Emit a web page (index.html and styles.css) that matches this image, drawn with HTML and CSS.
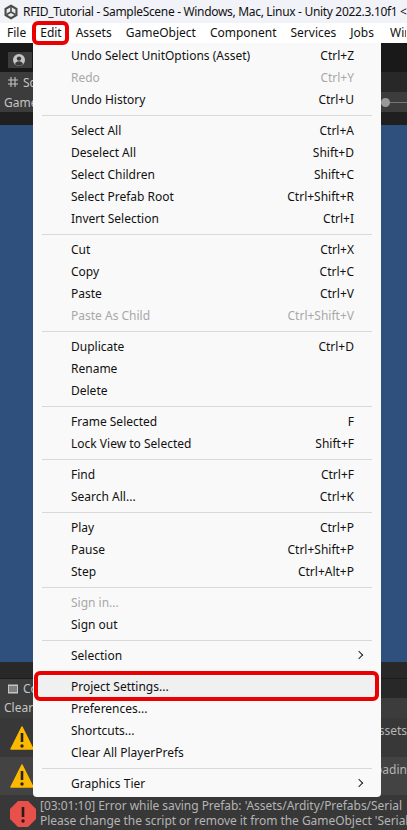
FILE: index.html
```html
<!DOCTYPE html>
<html lang="en">
<head>
  <meta charset="UTF-8" />
  <title>RFID_Tutorial - SampleScene - Unity</title>
  <link rel="stylesheet" href="styles.css">
</head>
<body>
  <div class="titlebar">
    <svg class="unity-logo" width="16" height="16" viewBox="0 0 16 16">
      <path d="M8 .5l6.500 3.700v7.600L8 15.500l-6.500-3.700V4.200z" fill="#4a4a4a"/>
      <path d="M8 3l4.400 2.500v5L8 13l-4.400-2.500v-5z" fill="#eaeaea"/>
      <path d="M8 8V3M8 8l4.400 2.500M8 8l-4.400 2.500" stroke="#4a4a4a" stroke-width="1.500"/>
    </svg>
    <span class="title-text">RFID_Tutorial - SampleScene - Windows, Mac, Linux - Unity 2022.3.10f1 &lt;</span>
  </div>

  <nav class="menubar">
    <a>File</a>
    <a class="marked">Edit</a>
    <a>Assets</a>
    <a>GameObject</a>
    <a>Component</a>
    <a>Services</a>
    <a>Jobs</a>
    <a>Window</a>
  </nav>

  <div class="toolbar">
    <div class="account">
      <svg width="12" height="12" viewBox="0 0 12 12">
        <circle cx="6" cy="6" r="6" fill="#c4c4c4"/>
        <circle cx="6" cy="4.600" r="2.200" fill="#3a3a3a"/>
        <path d="M2 10.200c.6-2.200 2.200-3 4-3s3.400.8 4 3a6 6 0 0 1-8 0z" fill="#3a3a3a"/>
      </svg>
    </div>
  </div>

  <div class="tabs">
    <div class="tab">
      <svg class="tab-icon" width="10" height="10" viewBox="0 0 10 10">
        <path d="M3 0v10M7 0v10M0 3h10M0 7h10" stroke="#c4c4c4" stroke-width="1.100"/>
      </svg>
      Scene
    </div>
  </div>
  <div class="scene-tools">
    <span class="tool-box">Game</span>
    <div class="slider"><i></i></div>
  </div>
  <div class="band"></div>
  <div class="scene-view"></div>
  <div class="gap-bar"></div>

  <div class="tabs console-tabs">
    <div class="tab">
      <svg class="tab-icon" width="10" height="10" viewBox="0 0 10 10">
        <path d="M0 .5h10v9H0z" fill="#c4c4c4"/>
        <path d="M1 3h8M1 5h8M1 7h8" stroke="#3c3c3c" stroke-width="1"/>
      </svg>
      Console
    </div>
  </div>
  <div class="console-tools">Clear</div>
  <div class="log-row">
    <svg class="log-icon warn" width="26" height="26" viewBox="0 0 26 26">
      <path d="M12 2L23 24H1z" fill="#fdb900" stroke="#fdb900" stroke-width="1.500" stroke-linejoin="round"/>
      <path d="M12 8v9" stroke="#222" stroke-width="2.600"/>
      <circle cx="12" cy="21" r="1.700" fill="#222"/>
    </svg>
    <p class="log-text"><span class="log-end">ssets</span></p>
  </div>
  <div class="log-row alt">
    <svg class="log-icon warn" width="26" height="26" viewBox="0 0 26 26">
      <path d="M12 2L23 24H1z" fill="#fdb900" stroke="#fdb900" stroke-width="1.500" stroke-linejoin="round"/>
      <path d="M12 8v9" stroke="#222" stroke-width="2.600"/>
      <circle cx="12" cy="21" r="1.700" fill="#222"/>
    </svg>
    <p class="log-text"><span class="log-end">oadin</span></p>
  </div>
  <div class="log-row error">
    <svg class="log-icon stop" width="26" height="26" viewBox="0 0 26 26">
      <path d="M8 0h10l8 8v10l-8 8H8l-8-8V8z" fill="#e8504a"/>
      <path d="M13 6v10" stroke="#2a1a1a" stroke-width="2.600"/>
      <circle cx="13" cy="20" r="1.700" fill="#2a1a1a"/>
    </svg>
    <div class="log-text">
      <p class="log-line">[03:01:10] Error while saving Prefab: 'Assets/Ardity/Prefabs/Serial</p>
      <p class="log-line">Please change the script or remove it from the GameObject 'Serial</p>
    </div>
  </div>

  <!-- Edit menu, open over the editor -->
  <div class="menu">
    <div class="item"><span>Undo Select UnitOptions (Asset)</span><kbd>Ctrl+Z</kbd></div>
    <div class="item off"><span>Redo</span><kbd>Ctrl+Y</kbd></div>
    <div class="item"><span>Undo History</span><kbd>Ctrl+U</kbd></div>
    <hr>
    <div class="item"><span>Select All</span><kbd>Ctrl+A</kbd></div>
    <div class="item"><span>Deselect All</span><kbd>Shift+D</kbd></div>
    <div class="item"><span>Select Children</span><kbd>Shift+C</kbd></div>
    <div class="item"><span>Select Prefab Root</span><kbd>Ctrl+Shift+R</kbd></div>
    <div class="item"><span>Invert Selection</span><kbd>Ctrl+I</kbd></div>
    <hr>
    <div class="item"><span>Cut</span><kbd>Ctrl+X</kbd></div>
    <div class="item"><span>Copy</span><kbd>Ctrl+C</kbd></div>
    <div class="item"><span>Paste</span><kbd>Ctrl+V</kbd></div>
    <div class="item off"><span>Paste As Child</span><kbd>Ctrl+Shift+V</kbd></div>
    <hr>
    <div class="item"><span>Duplicate</span><kbd>Ctrl+D</kbd></div>
    <div class="item"><span>Rename</span></div>
    <div class="item"><span>Delete</span></div>
    <hr>
    <div class="item"><span>Frame Selected</span><kbd>F</kbd></div>
    <div class="item"><span>Lock View to Selected</span><kbd>Shift+F</kbd></div>
    <hr>
    <div class="item"><span>Find</span><kbd>Ctrl+F</kbd></div>
    <div class="item"><span>Search All...</span><kbd>Ctrl+K</kbd></div>
    <hr>
    <div class="item"><span>Play</span><kbd>Ctrl+P</kbd></div>
    <div class="item"><span>Pause</span><kbd>Ctrl+Shift+P</kbd></div>
    <div class="item"><span>Step</span><kbd>Ctrl+Alt+P</kbd></div>
    <hr>
    <div class="item off"><span>Sign in...</span></div>
    <div class="item"><span>Sign out</span></div>
    <hr>
    <div class="item"><span>Selection</span><b class="arrow"></b></div>
    <hr>
    <div class="item current"><span>Project Settings...</span></div>
    <div class="item"><span>Preferences...</span></div>
    <div class="item"><span>Shortcuts...</span></div>
    <div class="item"><span>Clear All PlayerPrefs</span></div>
    <hr>
    <div class="item"><span>Graphics Tier</span><b class="arrow"></b></div>
  </div>
</body>
</html>
```

FILE: styles.css
```css
html, body { margin: 0; height: 100%; }
body {
  width: 407px;
  height: 830px;
  overflow: hidden;
  position: relative;
  background: #191919;
  font-family: "Noto Sans", sans-serif;
  font-size: 12px;
}

/* Window chrome */
.titlebar {
  height: 23px;
  background: #f1f3f8;
  color: #111;
  display: flex;
  align-items: center;
  gap: 4px;
  padding-left: 3px;
  white-space: nowrap;
  overflow: hidden;
}
.title-text { font-size: 12px; letter-spacing: -0.32px; }
.unity-logo { flex: none; }

.menubar {
  height: 20px;
  background: #fff;
  color: #111;
  display: flex;
  align-items: center;
  gap: 14px;
  padding: 0 0 2px 7px;
  box-sizing: border-box;
  white-space: nowrap;
  position: relative;
  z-index: 2;
}
.menubar a { position: relative; }
.menubar a:last-child { width: 16px; margin-left: 2px; overflow: hidden; }
.marked::after {
  content: "";
  position: absolute;
  left: -8px;
  right: -7px;
  top: -3px;
  bottom: -4px;
  border: 4px solid #ea0000;
  border-radius: 6px;
}

/* Editor panels behind the menu */
.toolbar { height: 29px; background: #191919; padding: 9px 0 0 8px; box-sizing: border-box; }
.account {
  width: 24px;
  height: 16px;
  background: #3c3c3c;
  display: flex;
  align-items: center;
  padding-left: 5px;
  box-sizing: border-box;
}
.tabs { height: 20px; background: #282828; color: #c4c4c4; }
.tab {
  height: 100%;
  width: 60px;
  background: #3c3c3c;
  display: flex;
  align-items: center;
  gap: 5px;
  padding-left: 8px;
  box-sizing: border-box;
  white-space: nowrap;
  overflow: hidden;
}
.tab-icon { flex: none; }
.scene-tools {
  height: 20px;
  background: #3c3c3c;
  color: #c4c4c4;
  display: flex;
  align-items: center;
  justify-content: space-between;
  padding-left: 4px;
  box-sizing: border-box;
}
.slider { width: 26px; height: 1px; background: #777; position: relative; }
.slider i { position: absolute; left: 0; top: -4px; width: 9px; height: 9px; border-radius: 50%; background: #9a9a9a; }
.band { height: 13px; background: #1f1f1f; }
.scene-view { height: 537px; background: #2f4f7c; }
.gap-bar { height: 16px; background: #282828; border-bottom: 1px solid #1c1c1c; }
.console-tabs { height: 19px; }
.console-tools {
  height: 20px;
  line-height: 19px;
  background: #3c3c3c;
  color: #c4c4c4;
  padding-left: 4px;
}
.log-row {
  height: 39px;
  background: #383838;
  color: #b4b4b4;
  display: flex;
  align-items: center;
  padding-left: 10px;
  gap: 4px;
  white-space: nowrap;
  overflow: hidden;
}
.log-row.alt { height: 38px; background: #434343; }
.log-row.error { height: 35px; background: #383838; }
.log-icon { flex: none; }
.log-icon.stop { margin-top: 2px; }
.log-text { margin: 0; font-size: 12px; flex: 1; min-width: 0; }
.log-line { margin: 0; line-height: 15px; letter-spacing: -0.04px; }
.log-end { display: block; text-align: right; margin-bottom: 14px; }

/* Edit menu */
.menu {
  position: absolute;
  left: 33px;
  top: 43px;
  width: 348px;
  height: 754px;
  box-sizing: border-box;
  padding: 2px;
  background: #f9f9f9;
  border-radius: 0 0 4px 4px;
  color: #111;
}
.item {
  height: 22px;
  display: flex;
  align-items: center;
  justify-content: space-between;
  padding: 0 25px 2px 36px;
  box-sizing: border-box;
  font-size: 12px;
  position: relative;
}
.item kbd { font: inherit; }
.item.off { color: #a8a8a8; }
.menu hr {
  height: 1px;
  margin: 4px 7px 4px 7px;
  border: 0;
  background: #d9d9d9;
}
.arrow {
  position: absolute;
  right: 17px;
  top: 7px;
  width: 5px;
  height: 5px;
  border-top: 1px solid #222;
  border-right: 1px solid #222;
  transform: rotate(45deg);
}
.current { background: #f0f0f0; }
.current::after {
  content: "";
  position: absolute;
  left: -1px;
  right: 0;
  top: -5px;
  bottom: -3px;
  border: 4px solid #ea0000;
  border-radius: 6px;
}
```
